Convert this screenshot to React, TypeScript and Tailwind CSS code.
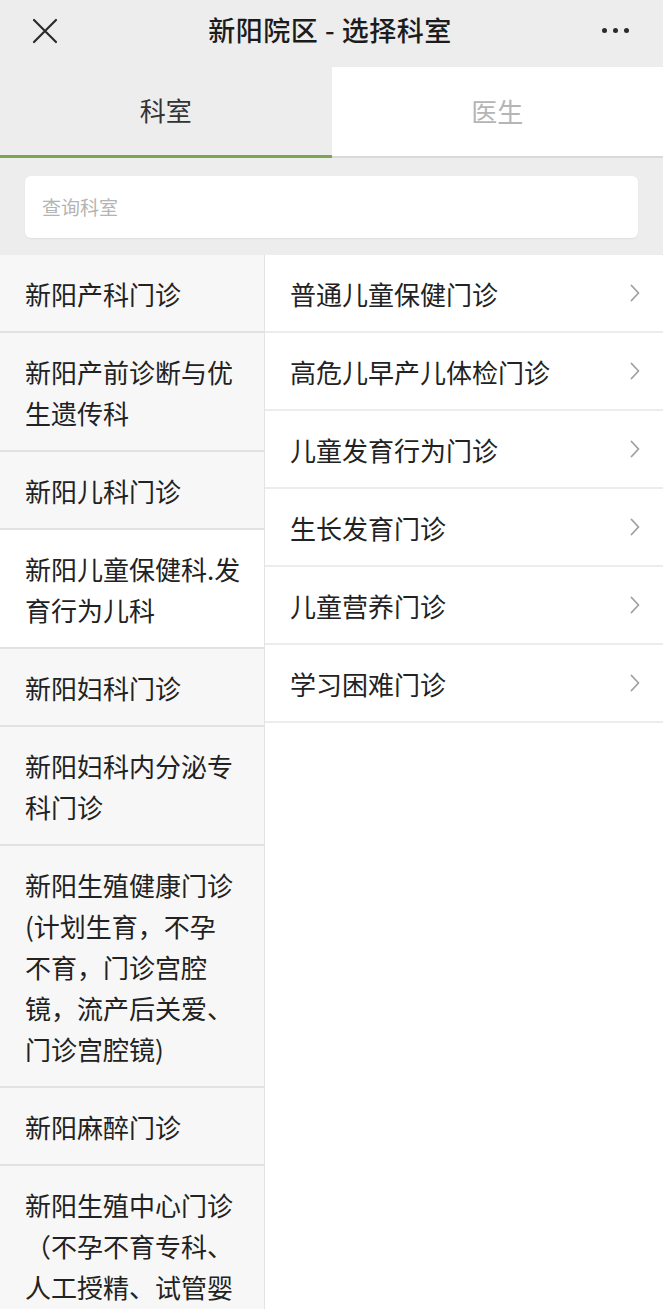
import { useState } from 'react';

type Dept = { id: number; lines: string[] };

const depts: Dept[] = [
  { id: 1, lines: ['新阳产科门诊'] },
  { id: 2, lines: ['新阳产前诊断与优', '生遗传科'] },
  { id: 3, lines: ['新阳儿科门诊'] },
  { id: 4, lines: ['新阳儿童保健科.发', '育行为儿科'] },
  { id: 5, lines: ['新阳妇科门诊'] },
  { id: 6, lines: ['新阳妇科内分泌专', '科门诊'] },
  { id: 7, lines: ['新阳生殖健康门诊', '(计划生育，不孕', '不育，门诊宫腔', '镜，流产后关爱、', '门诊宫腔镜)'] },
  { id: 8, lines: ['新阳麻醉门诊'] },
  { id: 9, lines: ['新阳生殖中心门诊', '（不孕不育专科、', '人工授精、试管婴'] },
];

const clinics = ['普通儿童保健门诊', '高危儿早产儿体检门诊', '儿童发育行为门诊', '生长发育门诊', '儿童营养门诊', '学习困难门诊'];

const font = { fontFamily: '"Noto Sans CJK SC", "Noto Sans", sans-serif' };

export default function App() {
  const [tab, setTab] = useState<'dept' | 'doctor'>('dept');
  const [active, setActive] = useState(4);

  return (
    <div className="w-[663px] h-[1309px] overflow-hidden bg-white text-[#222]" style={font}>
      {/* Header */}
      <div className="h-[67px] pb-[6px] bg-[#ededed] flex items-center justify-between px-[32px]">
        <svg width="26" height="26" viewBox="0 0 26 26" className="text-[#2b2b2b]">
          <path d="M2 2 L24 24 M24 2 L2 24" stroke="currentColor" strokeWidth="2.2" strokeLinecap="round" />
        </svg>
        <div className="text-[27px] font-medium text-[#1c1c1c] tracking-[0.5px]">新阳院区 - 选择科室</div>
        <div className="flex gap-[6px] pr-[2px]">
          <span className="w-[5px] h-[5px] rounded-full bg-[#2b2b2b]" />
          <span className="w-[5px] h-[5px] rounded-full bg-[#2b2b2b]" />
          <span className="w-[5px] h-[5px] rounded-full bg-[#2b2b2b]" />
        </div>
      </div>

      {/* Tabs */}
      <div className="flex h-[91px]">
        <button
          onClick={() => setTab('dept')}
          className={`flex-1 flex items-center justify-center pb-[3px] text-[26px] bg-[#ededed] ${tab === 'dept' ? 'text-[#333] border-b-[3px] border-[#7ea64f]' : 'text-[#b3b3b3] border-b-[2px] border-[#d9d9d9]'}`}
        >
          科室
        </button>
        <button
          onClick={() => setTab('doctor')}
          className={`flex-1 flex items-center justify-center pb-[3px] text-[26px] bg-white ${tab === 'doctor' ? 'text-[#333] border-b-[3px] border-[#7ea64f]' : 'text-[#b5b5b5] border-b-[2px] border-[#d9d9d9]'}`}
        >
          医生
        </button>
      </div>

      {/* Search */}
      <div className="bg-[#ededed] px-[25px] pt-[18px] pb-[17px]">
        <div className="h-[62px] bg-white rounded-[6px] shadow-[0_1px_2px_rgba(0,0,0,0.06)] flex items-center px-[17px]">
          <input
            placeholder="查询科室"
            className="w-full outline-none text-[19px] placeholder:text-[#b4b4b4] bg-transparent"
            style={font}
          />
        </div>
      </div>

      {/* Lists */}
      <div className="flex">
        <div className="w-[265px] shrink-0 border-r border-[#e3e3e3]">
          {depts.map((d) => (
            <div
              key={d.id}
              onClick={() => setActive(d.id)}
              className={`pl-[25px] pr-[10px] py-[17.5px] border-b-2 border-[#e2e2e2] text-[26px] leading-[41px] cursor-pointer ${active === d.id ? 'bg-white' : 'bg-[#f7f7f7]'}`}
            >
              {d.lines.map((l, i) => (
                <div key={i} className="whitespace-nowrap">{l}</div>
              ))}
            </div>
          ))}
        </div>

        <div className="flex-1 bg-white">
          {clinics.map((c) => (
            <div key={c} className="h-[78px] flex items-center justify-between pl-[25px] pr-[23px] border-b-2 border-[#ececec]">
              <span className="text-[26px]">{c}</span>
              <svg width="10" height="18" viewBox="0 0 10 18">
                <path d="M1.5 1.5 L8.5 9 L1.5 16.5" fill="none" stroke="#a0a0a0" strokeWidth="1.8" strokeLinecap="round" strokeLinejoin="round" />
              </svg>
            </div>
          ))}
        </div>
      </div>
    </div>
  );
}
